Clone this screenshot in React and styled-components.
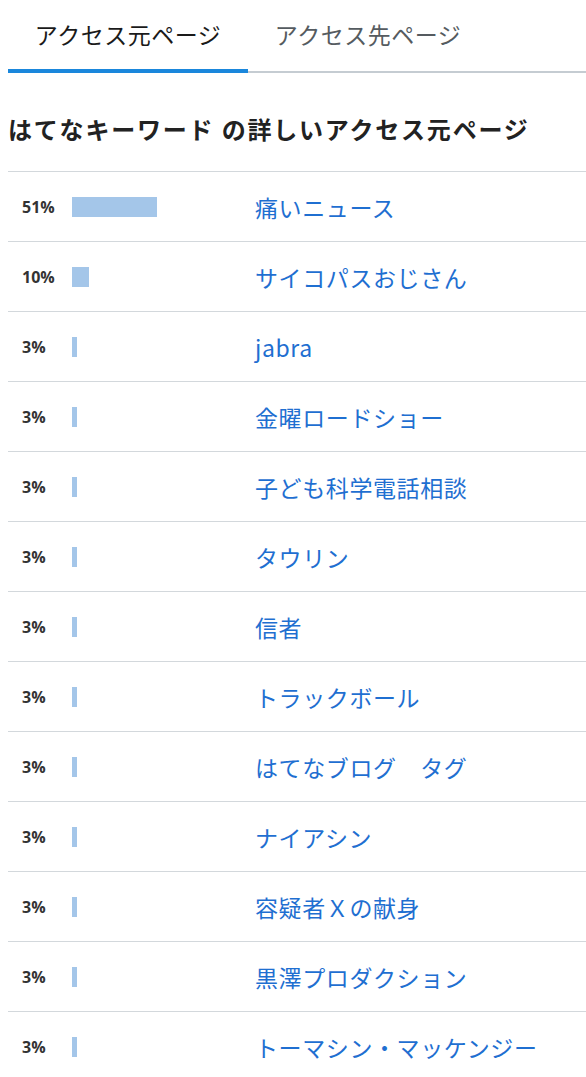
import React, { useState } from 'react';
import styled, { createGlobalStyle } from 'styled-components';

const GlobalStyle = createGlobalStyle`
  body {
    margin: 0;
    background: #fff;
    font-family: "Noto Sans CJK JP", "Noto Sans", sans-serif;
  }
`;

const rows = [
  { pct: 51, title: '痛いニュース' },
  { pct: 10, title: 'サイコパスおじさん' },
  { pct: 3, title: 'jabra' },
  { pct: 3, title: '金曜ロードショー' },
  { pct: 3, title: '子ども科学電話相談' },
  { pct: 3, title: 'タウリン' },
  { pct: 3, title: '信者' },
  { pct: 3, title: 'トラックボール' },
  { pct: 3, title: 'はてなブログ　タグ' },
  { pct: 3, title: 'ナイアシン' },
  { pct: 3, title: '容疑者Ｘの献身' },
  { pct: 3, title: '黒澤プロダクション' },
  { pct: 3, title: 'トーマシン・マッケンジー' },
];

export default function App() {
  const [tab, setTab] = useState(0);
  const tabs = ['アクセス元ページ', 'アクセス先ページ'];

  return (
    <>
      <GlobalStyle />
      <Wrapper>
        <TabBar>
          {tabs.map((t, i) => (
            <Tab key={t} active={i === tab} onClick={() => setTab(i)}>
              {t}
            </Tab>
          ))}
        </TabBar>
        <Heading>はてなキーワード の詳しいアクセス元ページ</Heading>
        <List>
          {rows.map((r, i) => (
            <Row key={i}>
              <Pct>{r.pct}%</Pct>
              <BarCell>
                <Bar style={{ width: Math.max(3, r.pct * 1.67) }} />
              </BarCell>
              <Title href="#">{r.title}</Title>
            </Row>
          ))}
        </List>
      </Wrapper>
    </>
  );
}

const Wrapper = styled.div`
  padding-left: 8px;
  overflow: hidden;
`;

const TabBar = styled.div`
  display: flex;
  border-bottom: 2px solid #c5ccd2;
`;

const Tab = styled.div`
  width: 240px;
  height: 67px;
  display: flex;
  align-items: center;
  justify-content: center;
  padding-bottom: 2px;
  font-size: 23px;
  letter-spacing: 0.5px;
  color: ${(p) => (p.active ? '#1a1a1a' : '#555b60')};
  border-bottom: 4px solid ${(p) => (p.active ? '#1a87dc' : 'transparent')};
  margin-bottom: -2px;
  cursor: pointer;
`;

const Heading = styled.h2`
  margin: 0;
  height: 98px;
  display: flex;
  align-items: center;
  padding-top: 12px;
  box-sizing: border-box;
  font-size: 24px;
  font-weight: 700;
  color: #222;
  letter-spacing: 1.8px;
`;

const List = styled.div`
  display: flex;
  flex-direction: column;
`;

const Row = styled.div`
  height: 69px;
  display: flex;
  align-items: center;
  border-top: 1px solid #d3d8dc;
`;

const Pct = styled.span`
  width: 50px;
  padding-left: 14px;
  font-family: "Open Sans", "Noto Sans", sans-serif;
  font-size: 16px;
  font-weight: 700;
  color: #333;
`;

const BarCell = styled.div`
  width: 183px;
  display: flex;
  align-items: center;
`;

const Bar = styled.div`
  height: 20px;
  background: #a4c6e9;
`;

const Title = styled.a`
  font-size: 23px;
  letter-spacing: 0.6px;
  color: #1f6fd1;
  text-decoration: none;
`;
